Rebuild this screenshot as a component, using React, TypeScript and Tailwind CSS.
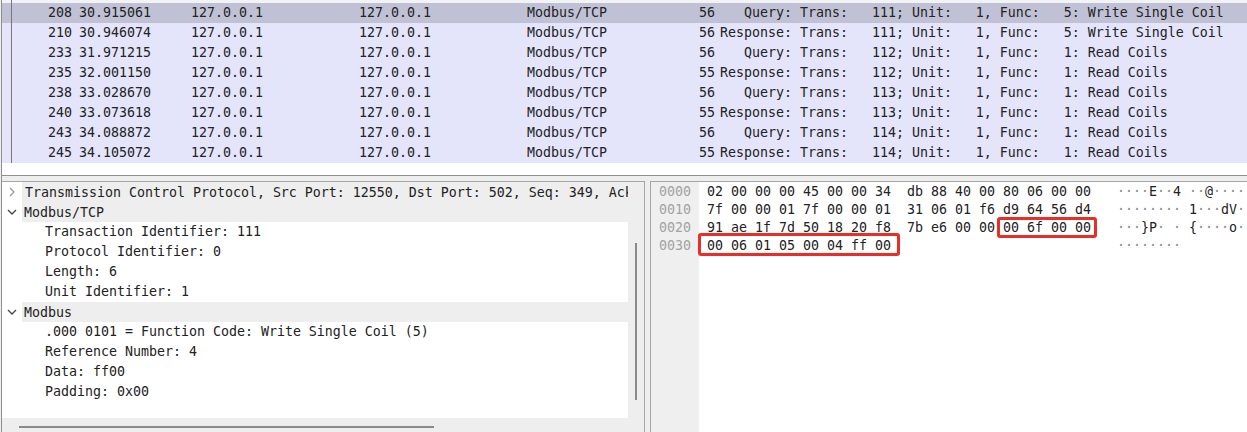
import React from "react";

const font = { fontFamily: '"DejaVu Sans Mono", monospace' };

const rows = [
  ["208", "30.915061", "56", "   Query: Trans:   111; Unit:   1, Func:   5: Write Single Coil"],
  ["210", "30.946074", "56", "Response: Trans:   111; Unit:   1, Func:   5: Write Single Coil"],
  ["233", "31.971215", "56", "   Query: Trans:   112; Unit:   1, Func:   1: Read Coils"],
  ["235", "32.001150", "55", "Response: Trans:   112; Unit:   1, Func:   1: Read Coils"],
  ["238", "33.028670", "56", "   Query: Trans:   113; Unit:   1, Func:   1: Read Coils"],
  ["240", "33.073618", "55", "Response: Trans:   113; Unit:   1, Func:   1: Read Coils"],
  ["243", "34.088872", "56", "   Query: Trans:   114; Unit:   1, Func:   1: Read Coils"],
  ["245", "34.105072", "55", "Response: Trans:   114; Unit:   1, Func:   1: Read Coils"],
];

const hex = [
  ["0000", "02 00 00 00 45 00 00 34", "db 88 40 00 80 06 00 00", "····E··4 ··@····"],
  ["0010", "7f 00 00 01 7f 00 00 01", "31 06 01 f6 d9 64 56 d4", "········ 1···dV··"],
  ["0020", "91 ae 1f 7d 50 18 20 f8", "7b e6 00 00 00 6f 00 00", "···}P· · {····o··"],
  ["0030", "00 06 01 05 00 04 ff 00", "", "········"],
];

function Ascii({ text }: { text: string }) {
  return (
    <div>
      {text.split("").map((c, i) => (
        <span key={i} className={c === "·" ? "text-[#8c8c8c]" : "text-[#222222]"}>{c}</span>
      ))}
    </div>
  );
}

function Chevron({ open, light }: { open?: boolean; light?: boolean }) {
  return (
    <svg width="10" height="10" viewBox="0 0 10 10" fill="none" stroke={light ? "#9a9a9a" : "#444"} strokeWidth="1.3" className="shrink-0">
      <path d={open ? "M1 3 L5 7 L9 3" : "M3 1 L7 5 L3 9"} />
    </svg>
  );
}

function TreeHead({ open, text, indent }: { open?: boolean; text: string; indent: string }) {
  return (
    <div className="flex h-5 items-center">
      <div className="flex w-[20px] shrink-0 items-center justify-center">
        <Chevron open={open} light={!open} />
      </div>
      <div className={`h-5 min-w-0 flex-1 overflow-hidden bg-[#eeeeee] leading-5 whitespace-pre ${indent}`}>{text}</div>
    </div>
  );
}

function TreeLeaf({ text }: { text: string }) {
  return <div className="h-5 pl-[43px] leading-5 whitespace-pre">{text}</div>;
}

export default function App() {
  return (
    <div className="flex h-[432px] w-[1247px] flex-col overflow-hidden border-l border-[#eeeeee] bg-white text-[13.29px] text-[#222222]" style={font}>
      <div className="flex h-[176px] shrink-0 flex-col border-b border-l border-[#8f8f8f]">
        <div className="flex h-[3px] shrink-0 bg-[#f2f2f7]">
          <div className="ml-[9px] h-[3px] w-px bg-[#77777f]" />
        </div>
        {rows.map((r, i) => (
          <div key={r[0]} className={`flex h-5 shrink-0 items-center leading-5 whitespace-pre ${i === 0 ? "bg-[#c1c1d6]" : "bg-[#e4e4fb]"}`}>
            <div className="ml-[9px] h-5 w-px shrink-0 bg-[#77777f]" />
            <div className="w-[60px] shrink-0 text-right">{r[0]}</div>
            <div className="ml-[7px] w-[112px] shrink-0">{r[1]}</div>
            <div className="w-[168px] shrink-0">127.0.0.1</div>
            <div className="w-[168px] shrink-0">127.0.0.1</div>
            <div className="w-[172px] shrink-0">Modbus/TCP</div>
            <div className="w-[21px] shrink-0">{r[2]}</div>
            <div>{r[3]}</div>
          </div>
        ))}
      </div>
      <div className="flex min-h-0 flex-1 flex-col border-l border-[#8f8f8f] bg-[#eeeeee]">
        <div className="h-[5px] shrink-0" />
        <div className="flex min-h-0 flex-1">
          <div className="flex w-[643px] shrink-0 border-t border-r border-[#a6a6a6]">
            <div className="flex w-[626px] shrink-0 flex-col">
              <div className="h-[236px] shrink-0 bg-white">
                <TreeHead text="Transmission Control Protocol, Src Port: 12550, Dst Port: 502, Seq: 349, Ack: 1" indent="pl-[3px] pt-px" />
                <TreeHead open text="Modbus/TCP" indent="pl-[2px] pt-px" />
                <TreeLeaf text="Transaction Identifier: 111" />
                <TreeLeaf text="Protocol Identifier: 0" />
                <TreeLeaf text="Length: 6" />
                <TreeLeaf text="Unit Identifier: 1" />
                <TreeHead open text="Modbus" indent="pl-[2px] pt-px" />
                <TreeLeaf text=".000 0101 = Function Code: Write Single Coil (5)" />
                <TreeLeaf text="Reference Number: 4" />
                <TreeLeaf text="Data: ff00" />
                <TreeLeaf text="Padding: 0x00" />
              </div>
              <div className="ml-[17px] mt-2 h-[2px] w-[415px] bg-[#8a8a8a]" />
            </div>
            <div className="w-[14px] shrink-0 pl-[7px] pt-[61px]">
              <div className="h-[157px] w-[2px] bg-[#8a8a8a]" />
            </div>
          </div>
          <div className="w-[5px] shrink-0" />
          <div className="relative flex min-w-0 flex-1 border-t border-l border-[#a6a6a6] bg-white">
            <div className="w-[48px] shrink-0 bg-[#efefef] pl-2 leading-[18px] text-[#a3a3a3]">
              {hex.map((h) => (
                <div key={h[0]} className="h-[18px] pt-px">{h[0]}</div>
              ))}
            </div>
            <div className="pl-2 leading-[18px] whitespace-pre">
              {hex.map((h) => (
                <div key={h[0]} className="flex h-[18px] pt-px">
                  <div className="w-[200px] shrink-0">{h[1]}</div>
                  <div className="w-[210px] shrink-0">{h[2]}</div>
                  <Ascii text={h[3]} />
                </div>
              ))}
            </div>
            <div className="absolute left-[346px] top-[35px] h-[21px] w-[100px] rounded-[3px] border-[3px] border-[#ea2d26]" />
            <div className="absolute left-[47px] top-[51px] h-[23px] w-[202px] rounded-[3px] border-[3px] border-[#ea2d26]" />
          </div>
        </div>
      </div>
    </div>
  );
}
